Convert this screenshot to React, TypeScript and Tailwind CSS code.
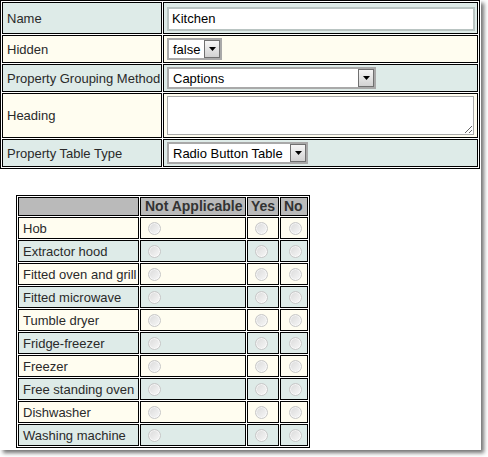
import React from "react";

const TEAL = "bg-[#deebe8]";
const IVORY = "bg-[#fffdf0]";

function Arrow() {
  return (
    <svg width="7" height="4" viewBox="0 0 7 4">
      <path d="M0 0H7L3.5 4Z" fill="#000" />
    </svg>
  );
}

function Select({ value, w }: { value: string; w: string }) {
  return (
    <div className={`${w} h-[22px] flex items-stretch bg-white border-2 border-[#a9a9a9]`}>
      <div className="flex-1 flex items-center pl-[4px] pt-[1px] text-black leading-none whitespace-nowrap overflow-hidden">
        {value}
      </div>
      <div className="w-[16px] border border-[#707070] bg-gradient-to-b from-[#f6f6f6] to-[#d2d2d2] flex items-center justify-center">
        <Arrow />
      </div>
    </div>
  );
}

function Radio() {
  return (
    <span className="block w-[13px] h-[13px] rounded-full border border-[#c8c8c8] bg-gradient-to-br from-[#dadada] to-[#f8f8f8] shadow-[inset_0_0_0_1px_rgba(255,255,255,0.6)]" />
  );
}

const rows2 = [
  "Hob",
  "Extractor hood",
  "Fitted oven and grill",
  "Fitted microwave",
  "Tumble dryer",
  "Fridge-freezer",
  "Freezer",
  "Free standing oven",
  "Dishwasher",
  "Washing machine",
];

export default function App() {
  const cell = "border border-black flex items-center";
  return (
    <div className="w-[488px] h-[457px] bg-white font-['Liberation_Sans',Arial,sans-serif] text-[13px] text-[#2a2a2a]">
      <div className="w-[481px] h-[450px] bg-white shadow-[3px_3px_4px_rgba(0,0,0,0.55)]">
        {/* Top property table */}
        <div className="w-[480px] border border-black p-[1px] flex flex-col gap-[1px] bg-white">
          <div className="flex gap-[1px] h-[32px]">
            <div className={`${cell} ${TEAL} w-[160px] pl-[4px] pt-[2px]`}>Name</div>
            <div className={`${cell} ${TEAL} flex-1 pl-[3px] pt-[1px]`}>
              <div className="w-[308px] h-[24px] bg-white border-2 border-[#b9c4c2] flex items-center pl-[3px] pt-[1px] text-black">
                Kitchen
              </div>
            </div>
          </div>
          <div className="flex gap-[1px] h-[28px]">
            <div className={`${cell} ${IVORY} w-[160px] pl-[4px] pt-[1px]`}>Hidden</div>
            <div className={`${cell} ${IVORY} flex-1 pl-[3px]`}>
              <Select value="false" w="w-[55px]" />
            </div>
          </div>
          <div className="flex gap-[1px] h-[28px]">
            <div className={`${cell} ${TEAL} w-[160px] pl-[4px] pt-[1px] whitespace-nowrap`}>Property Grouping Method</div>
            <div className={`${cell} ${TEAL} flex-1 pl-[3px]`}>
              <Select value="Captions" w="w-[209px]" />
            </div>
          </div>
          <div className="flex gap-[1px] h-[45px]">
            <div className={`${cell} ${IVORY} w-[160px] pl-[4px]`}>Heading</div>
            <div className={`${cell} ${IVORY} flex-1 pl-[3px]`}>
              <textarea
                readOnly
                className="w-[307px] h-[39px] bg-white border border-[#a9a9a9] outline-none resize"
              />
            </div>
          </div>
          <div className="flex gap-[1px] h-[28px]">
            <div className={`${cell} ${TEAL} w-[160px] pl-[4px] pt-[1px]`}>Property Table Type</div>
            <div className={`${cell} ${TEAL} flex-1 pl-[3px]`}>
              <Select value="Radio Button Table" w="w-[141px]" />
            </div>
          </div>
        </div>

        {/* Radio button table */}
        <div className="ml-[16px] mt-[26px] w-[294px] border border-black p-[1px] flex flex-col gap-[1px] bg-white">
          <div className="flex gap-[1px] h-[19px] text-[14px] font-bold text-[#333]">
            <div className={`${cell} bg-[#bababa] w-[121px]`} />
            <div className={`${cell} bg-[#bababa] w-[106px] pl-[4px] whitespace-nowrap`}>Not Applicable</div>
            <div className={`${cell} bg-[#bababa] w-[32px] pl-[3px]`}>Yes</div>
            <div className={`${cell} bg-[#bababa] w-[28px] pl-[3px]`}>No</div>
          </div>
          {rows2.map((r, i) => {
            const bg = i % 2 === 0 ? IVORY : TEAL;
            return (
              <div key={r} className="flex gap-[1px] h-[22px]">
                <div className={`${cell} ${bg} w-[121px] pl-[4px] pt-[1px] whitespace-nowrap`}>{r}</div>
                <div className={`${cell} ${bg} w-[106px] pl-[7px]`}>
                  <Radio />
                </div>
                <div className={`${cell} ${bg} w-[32px] pl-[7px]`}>
                  <Radio />
                </div>
                <div className={`${cell} ${bg} w-[28px] pl-[8px]`}>
                  <Radio />
                </div>
              </div>
            );
          })}
        </div>
      </div>
    </div>
  );
}
